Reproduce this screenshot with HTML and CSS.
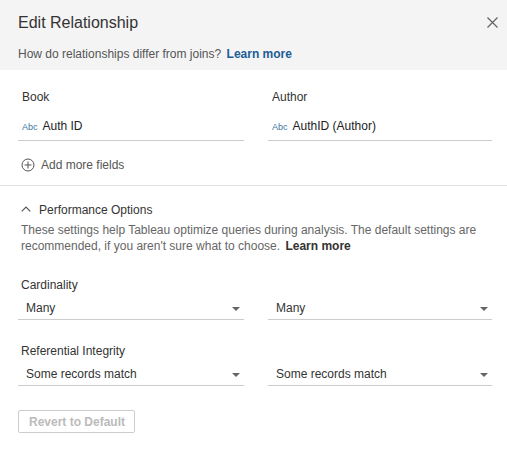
FILE: index.html
```html
<!DOCTYPE html>
<html>
<head>
<meta charset="utf-8">
<link rel="stylesheet" href="styles.css">
</head>
<body>
<div class="dialog">
  <div class="header">
    <div class="title-row">
      <div class="title">Edit Relationship</div>
      <svg class="close" width="11" height="11" viewBox="0 0 11 11"><path d="M0.5 0.5 L10.5 10.5 M10.5 0.5 L0.5 10.5" stroke="#666" stroke-width="1.3" fill="none"/></svg>
    </div>
    <div class="subtitle">How do relationships differ from joins? <a class="link">Learn more</a></div>
  </div>

  <div class="fields">
    <div class="cols">
      <div class="col">
        <div class="label">Book</div>
        <div class="field"><span class="abc">Abc</span><span>Auth ID</span></div>
      </div>
      <div class="col">
        <div class="label">Author</div>
        <div class="field"><span class="abc">Abc</span><span>AuthID (Author)</span></div>
      </div>
    </div>
    <div class="add">
      <svg width="14" height="14" viewBox="0 0 14 14"><circle cx="7" cy="7" r="6" stroke="#555" stroke-width="1" fill="none"/><path d="M7 3.5 V10.5 M3.5 7 H10.5" stroke="#555" stroke-width="1"/></svg>
      <span>Add more fields</span>
    </div>
  </div>

  <div class="perf">
    <div class="perf-head">
      <svg width="10" height="6" viewBox="0 0 10 6"><path d="M0.7 5.3 L5 1 L9.3 5.3" stroke="#555" stroke-width="1.2" fill="none"/></svg>
      <span>Performance Options</span>
    </div>
    <p class="desc">These settings help Tableau optimize queries during analysis. The default settings are recommended, if you aren't sure what to choose. <b>Learn more</b></p>

    <div class="group">
      <div class="glabel">Cardinality</div>
      <div class="cols">
        <div class="select"><span>Many</span><i class="arrow"></i></div>
        <div class="select"><span>Many</span><i class="arrow"></i></div>
      </div>
    </div>
    <div class="group">
      <div class="glabel">Referential Integrity</div>
      <div class="cols">
        <div class="select"><span>Some records match</span><i class="arrow"></i></div>
        <div class="select"><span>Some records match</span><i class="arrow"></i></div>
      </div>
    </div>
    <button class="revert">Revert to Default</button>
  </div>
</div>
</body>
</html>
```

FILE: styles.css
```css
* { box-sizing: border-box; }
html, body { margin: 0; padding: 0; background: #fff; }
body {
  font-family: "Liberation Sans", Arial, sans-serif;
  font-size: 12px;
  line-height: 16px;
  color: #333;
}
.dialog { width: 507px; }
.header {
  background: #f4f4f4;
  padding: 13px 9px 8px 18px;
  height: 70px;
}
.title-row {
  display: flex;
  justify-content: space-between;
  align-items: flex-start;
}
.title {
  font-size: 16px;
  line-height: 20px;
  color: #333;
}
.close { margin-top: 4px; }
.subtitle {
  margin-top: 13px;
  color: #555;
}
.link {
  color: #215e96;
  font-weight: bold;
  margin-left: 2px;
}
.fields {
  padding: 19px 15px 12px 18px;
  border-bottom: 1px solid #e0e0e0;
}
.cols {
  display: grid;
  grid-template-columns: 226px 224px;
  column-gap: 24px;
}
.label { padding-left: 4px; color: #333; }
.field {
  margin-top: 13px;
  padding: 0 0 5px 4px;
  border-bottom: 1px solid #ccc;
  display: flex;
  align-items: baseline;
  color: #222;
}
.abc {
  font-size: 9px;
  color: #3a76a2;
  margin-right: 5px;
}
.add {
  margin-top: 16px;
  display: flex;
  align-items: center;
  gap: 6px;
  padding-left: 3px;
  color: #555;
}
.add svg { margin-top: -1px; }
.perf {
  padding: 16px 15px 0 18px;
}
.perf-head {
  display: flex;
  align-items: center;
  gap: 8px;
  padding-left: 3px;
  color: #333;
}
.perf-head svg { margin-top: -2px; }
.desc {
  margin: 4px 0 0 0;
  padding-left: 3px;
  color: #666;
}
.desc b { color: #333; margin-left: 2px; }
.group { margin-top: 23px; }
.group + .group { margin-top: 23px; }
.glabel { padding-left: 3px; color: #333; }
.select {
  margin-top: 7px;
  padding: 0 4px 3px 8px;
  border-bottom: 1px solid #ccc;
  display: flex;
  justify-content: space-between;
  align-items: center;
  color: #333;
}
.arrow {
  width: 0;
  height: 0;
  border-left: 4px solid transparent;
  border-right: 4px solid transparent;
  border-top: 4px solid #666;
  margin-top: 1px;
}
.revert {
  margin-top: 24px;
  height: 23px;
  padding: 0 9px 0 10px;
  border: 1px solid #ccc;
  border-radius: 2px;
  background: #fff;
  color: #bbb;
  font-family: "Liberation Sans", Arial, sans-serif;
  font-size: 12px;
  font-weight: bold;
}
```
